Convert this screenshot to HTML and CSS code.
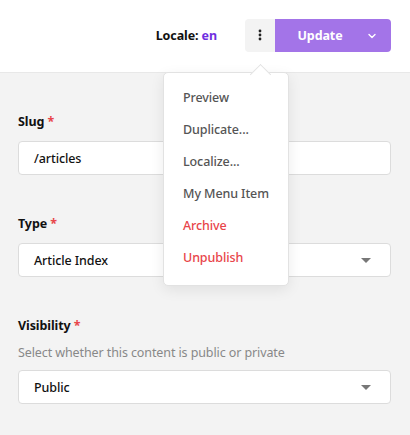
FILE: index.html
```html
<!DOCTYPE html>
<html>
<head>
<meta charset="utf-8">
<link rel="stylesheet" href="styles.css">
</head>
<body>
<header class="topbar">
  <div class="locale">Locale: <span class="locale-code">en</span></div>
  <div class="actions">
    <button class="kebab" aria-label="More">
      <svg width="4" height="12" viewBox="0 0 4 12"><circle cx="2" cy="2" r="1.4"/><circle cx="2" cy="6" r="1.4"/><circle cx="2" cy="10" r="1.4"/></svg>
    </button>
    <div class="update">
      <span class="update-label">Update</span>
      <span class="update-caret">
        <svg width="10" height="6" viewBox="0 0 10 6"><path d="M2 1.5 L5 4.5 L8 1.5" fill="none" stroke="#fff" stroke-width="1.4" stroke-linecap="round" stroke-linejoin="round"/></svg>
      </span>
    </div>
    <div class="menu">
      <div class="menu-item">Preview</div>
      <div class="menu-item">Duplicate...</div>
      <div class="menu-item">Localize...</div>
      <div class="menu-item">My Menu Item</div>
      <div class="menu-item danger">Archive</div>
      <div class="menu-item danger">Unpublish</div>
    </div>
  </div>
</header>
<main class="form">
  <div class="field">
    <label class="label">Slug <span class="req">*</span></label>
    <div class="input">/articles</div>
  </div>
  <div class="field">
    <label class="label">Type <span class="req">*</span></label>
    <div class="input select">Article Index <span class="caret"></span></div>
  </div>
  <div class="field">
    <label class="label">Visibility <span class="req">*</span></label>
    <div class="help">Select whether this content is public or private</div>
    <div class="input select">Public <span class="caret"></span></div>
  </div>
</main>
</body>
</html>
```
FILE: styles.css
```css
* { box-sizing: border-box; }
html, body { margin: 0; padding: 0; }
body {
  width: 410px;
  height: 435px;
  overflow: hidden;
  background: #f3f3f3;
  font-family: "Noto Sans", "DejaVu Sans", sans-serif;
  font-size: 12.5px;
  letter-spacing: -0.1px;
  color: #111;
}
.topbar {
  height: 73px;
  background: #fff;
  border-bottom: 1px solid #e8e8e8;
  display: flex;
  align-items: center;
  justify-content: flex-end;
  padding: 0 19px 2px 0;
}
.locale {
  font-weight: 700;
  margin-right: 28px;
}
.locale-code { color: #6f2ee0; }
.actions {
  position: relative;
  display: flex;
  align-items: center;
}
.kebab {
  width: 30px;
  height: 33px;
  border: none;
  background: #f3f3f3;
  border-radius: 4px 0 0 4px;
  display: flex;
  align-items: center;
  justify-content: center;
  padding: 0;
  fill: #222;
}
.update {
  width: 116px;
  height: 33px;
  background: #a374e8;
  border-radius: 0 4px 4px 0;
  color: #fff;
  font-weight: 700;
  display: flex;
  align-items: center;
  position: relative;
}
.update-label {
  flex: 1;
  text-align: center;
  padding-right: 30px;
  padding-left: 4px;
}
.update-caret {
  position: absolute;
  right: 14px;
  top: 14px;
  display: flex;
}
.menu {
  position: absolute;
  top: 53px;
  left: -82px;
  width: 126px;
  background: #fff;
  border: 1px solid #e2e2e2;
  border-radius: 5px;
  box-shadow: 0 4px 14px rgba(0,0,0,0.08);
  padding: 9px 0 11px;
  z-index: 5;
}
.menu::before {
  content: "";
  position: absolute;
  top: -6px;
  left: 89px;
  width: 14px;
  height: 14px;
  background: #fff;
  border-left: 1px solid #e2e2e2;
  border-top: 1px solid #e2e2e2;
  transform: rotate(45deg);
}
.menu-item {
  height: 32px;
  line-height: 32px;
  padding-left: 19px;
  color: #555;
  font-weight: 500;
  position: relative;
}
.menu-item.danger { color: #e8454a; }
.form {
  padding: 40px 19px 0 18px;
  display: flex;
  flex-direction: column;
  gap: 40px;
}
.field { display: flex; flex-direction: column; }
.label {
  font-weight: 700;
  margin-bottom: 10px;
  line-height: 18px;
}
.req { color: #e8454a; }
.help {
  color: #888;
  margin-top: -1px;
  margin-bottom: 8px;
  line-height: 18px;
}
.input {
  height: 34px;
  background: #fff;
  border: 1px solid #dcdcdc;
  border-radius: 4px;
  padding: 0 15px;
  display: flex;
  align-items: center;
  font-weight: 500;
  color: #111;
}
.select { justify-content: space-between; padding-right: 19px; }
.caret {
  width: 0;
  height: 0;
  border-left: 5px solid transparent;
  border-right: 5px solid transparent;
  border-top: 5px solid #777;
}
```
